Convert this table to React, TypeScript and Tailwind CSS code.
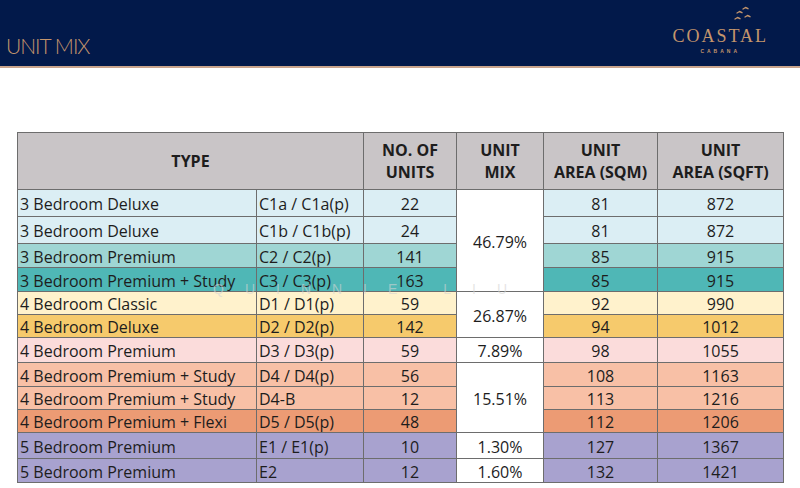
import React from 'react';

type Row = {
  name: string;
  code: string;
  units: number;
  mix?: { value: string; span: number };
  sqm: number;
  sqft: number;
  bg: string;
  h: string;
};

const rows: Row[] = [
  { name: '3 Bedroom Deluxe', code: 'C1a / C1a(p)', units: 22, mix: { value: '46.79%', span: 4 }, sqm: 81, sqft: 872, bg: 'bg-[#dbeef4]', h: 'h-[27px]' },
  { name: '3 Bedroom Deluxe', code: 'C1b / C1b(p)', units: 24, sqm: 81, sqft: 872, bg: 'bg-[#dbeef4]', h: 'h-[27px]' },
  { name: '3 Bedroom Premium', code: 'C2 / C2(p)', units: 141, sqm: 85, sqft: 915, bg: 'bg-[#9fd6d4]', h: 'h-[24px]' },
  { name: '3 Bedroom Premium + Study', code: 'C3 / C3(p)', units: 163, sqm: 85, sqft: 915, bg: 'bg-[#4fb7b6]', h: 'h-[24px]' },
  { name: '4 Bedroom Classic', code: 'D1 / D1(p)', units: 59, mix: { value: '26.87%', span: 2 }, sqm: 92, sqft: 990, bg: 'bg-[#fff2cc]', h: 'h-[23px]' },
  { name: '4 Bedroom Deluxe', code: 'D2 / D2(p)', units: 142, sqm: 94, sqft: 1012, bg: 'bg-[#f6ca6c]', h: 'h-[23px]' },
  { name: '4 Bedroom Premium', code: 'D3 / D3(p)', units: 59, mix: { value: '7.89%', span: 1 }, sqm: 98, sqft: 1055, bg: 'bg-[#fbdcdb]', h: 'h-[25px]' },
  { name: '4 Bedroom Premium + Study', code: 'D4 / D4(p)', units: 56, mix: { value: '15.51%', span: 3 }, sqm: 108, sqft: 1163, bg: 'bg-[#f8c0a6]', h: 'h-[24px]' },
  { name: '4 Bedroom Premium + Study', code: 'D4-B', units: 12, sqm: 113, sqft: 1216, bg: 'bg-[#f8c0a6]', h: 'h-[23px]' },
  { name: '4 Bedroom Premium + Flexi', code: 'D5 / D5(p)', units: 48, sqm: 112, sqft: 1206, bg: 'bg-[#ec9b74]', h: 'h-[23px]' },
  { name: '5 Bedroom Premium', code: 'E1 / E1(p)', units: 10, mix: { value: '1.30%', span: 1 }, sqm: 127, sqft: 1367, bg: 'bg-[#a8a2cf]', h: 'h-[26px]' },
  { name: '5 Bedroom Premium', code: 'E2', units: 12, mix: { value: '1.60%', span: 1 }, sqm: 132, sqft: 1421, bg: 'bg-[#a8a2cf]', h: 'h-[24px]' },
];

const Logo: React.FC = () => (
  <div className="flex flex-col items-center">
    <svg width="24" height="18" viewBox="0 0 24 18" className="ml-[44px] mb-[3px]">
      <g fill="none" stroke="#c4956c" strokeWidth="1.4" strokeLinecap="round" strokeLinejoin="round">
        <path d="M13 3 l2.5 -1.5 l2.5 1.2" />
        <path d="M7 7 l2.5 -1.5 l2.5 1.2" />
        <path d="M15 11 l2.5 -1.5 l2.5 1.2" />
        <path d="M5 13 l2.5 -1.5 l2.5 1.2" />
      </g>
    </svg>
    <div className="text-[18px] leading-none tracking-[2px] text-[#c4956c]" style={{ fontFamily: '"Liberation Serif", "DejaVu Serif", serif' }}>
      COASTAL
    </div>
    <div className="mt-[4px] text-[5px] font-bold leading-none tracking-[3px] text-[#c4956c]" style={{ fontFamily: '"Liberation Sans", sans-serif' }}>
      CABANA
    </div>
  </div>
);

const App: React.FC = () => {
  const cell = 'border border-[#6d6d6d] p-0';
  return (
    <div className="relative w-[800px] h-[488px] overflow-hidden bg-white" style={{ fontFamily: '"Open Sans", "Noto Sans", sans-serif' }}>
      <header className="flex h-[68px] items-end justify-between bg-[#02194a] pl-[6px] pr-[32px] pb-[12px] border-b-2 border-[#c9a48c]">
        <div className="-mb-[2px] text-[21px] font-light leading-none tracking-[-1px] text-[#c4956c]" style={{ fontFamily: 'Lato, sans-serif' }}>
          UNIT MIX
        </div>
        <Logo />
      </header>

      <div className="pl-[17px] pt-[64px]">
        <table className="border-collapse text-[16px] text-[#1d1d1d] leading-none">
          <colgroup>
            <col className="w-[239px]" />
            <col className="w-[107px]" />
            <col className="w-[93px]" />
            <col className="w-[87px]" />
            <col className="w-[114px]" />
            <col className="w-[126px]" />
          </colgroup>
          <thead>
            <tr className="h-[57px] bg-[#c9c5c7] font-bold text-[16px] leading-[22px]">
              <th colSpan={2} className={cell}>TYPE</th>
              <th className={cell}>NO. OF<br />UNITS</th>
              <th className={cell}>UNIT<br />MIX</th>
              <th className={cell}>UNIT<br />AREA (SQM)</th>
              <th className={cell}>UNIT<br />AREA (SQFT)</th>
            </tr>
          </thead>
          <tbody>
            {rows.map((r, i) => (
              <tr key={i} className={`${r.h} ${r.bg}`}>
                <td className={`${cell} pl-[2px] pt-[2px] whitespace-nowrap`}>{r.name}</td>
                <td className={`${cell} pl-[2px] pt-[2px] whitespace-nowrap`}>{r.code}</td>
                <td className={`${cell} pt-[2px] text-center`}>{r.units}</td>
                {r.mix && (
                  <td rowSpan={r.mix.span} className={`${cell} pt-[2px] bg-white text-center`}>
                    {r.mix.value}
                  </td>
                )}
                <td className={`${cell} pt-[2px] text-center`}>{r.sqm}</td>
                <td className={`${cell} pt-[2px] text-center`}>{r.sqft}</td>
              </tr>
            ))}
          </tbody>
        </table>
      </div>

      <div className="pointer-events-none absolute left-[213px] top-[279px] text-[14px] tracking-[21px] text-[#d4d4d4]/60" style={{ fontFamily: '"Liberation Sans", sans-serif' }}>
        QUINNIE LIU
      </div>
    </div>
  );
};

export default App;
